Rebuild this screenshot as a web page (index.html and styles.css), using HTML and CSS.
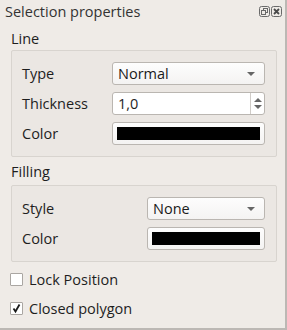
FILE: index.html
```html
<!DOCTYPE html>
<html lang="en">
<head>
    <meta charset="UTF-8">
    <title>Selection properties</title>
    <link rel="stylesheet" href="styles.css">
</head>
<body>
    <div class="panel">
        <div class="titlebar">
            <span class="title">Selection properties</span>
            <div class="title-buttons">
                <svg width="11" height="11" viewBox="0 0 11 11">
                    <rect x="0.5" y="0.5" width="10" height="10" rx="2" fill="none" stroke="#6a6a6a"/>
                    <rect x="4.5" y="2.5" width="4" height="4" fill="none" stroke="#6a6a6a"/>
                    <rect x="2.5" y="4.5" width="4" height="4" fill="#efebe7" stroke="#6a6a6a"/>
                </svg>
                <svg width="11" height="11" viewBox="0 0 11 11">
                    <rect x="0.5" y="0.5" width="10" height="10" rx="2" fill="none" stroke="#6a6a6a"/>
                    <path d="M3 3 L8 8 M8 3 L3 8" stroke="#4a4a4a" stroke-width="1.8"/>
                </svg>
            </div>
        </div>

        <div class="section-title">Line</div>
        <div class="group">
            <div class="row">
                <label>Type</label>
                <div class="combo wide">Normal<span class="arrow"></span></div>
            </div>
            <div class="row">
                <label>Thickness</label>
                <div class="spin wide">
                    <span class="spin-value">1,0</span>
                    <span class="spin-buttons">
                        <span class="up"></span>
                        <span class="down"></span>
                    </span>
                </div>
            </div>
            <div class="row">
                <label>Color</label>
                <div class="color-btn wide"><span class="swatch"></span></div>
            </div>
        </div>

        <div class="section-title filling">Filling</div>
        <div class="group">
            <div class="row">
                <label>Style</label>
                <div class="combo narrow">None<span class="arrow"></span></div>
            </div>
            <div class="row">
                <label>Color</label>
                <div class="color-btn narrow"><span class="swatch"></span></div>
            </div>
        </div>

        <div class="check-row first">
            <span class="checkbox"></span>
            <span>Lock Position</span>
        </div>
        <div class="check-row">
            <span class="checkbox checked">
                <svg width="11" height="11" viewBox="0 0 11 11">
                    <path d="M2.5 5.5 L4.5 8.5 L8.5 1.5" fill="none" stroke="#1a1a1a" stroke-width="1.8"/>
                </svg>
            </span>
            <span>Closed polygon</span>
        </div>
    </div>
</body>
</html>
```

FILE: styles.css
```css
body {
    margin: 0;
    font-family: "Open Sans", "Noto Sans", sans-serif;
    font-size: 14.5px;
    color: #1e1e1e;
}
.panel {
    width: 287px;
    height: 330px;
    box-sizing: border-box;
    background: #efebe7;
    border-right: 2px solid #bcb8b4;
    border-bottom: 2px solid #bcb8b4;
}
.titlebar {
    height: 22px;
    display: flex;
    align-items: center;
    justify-content: space-between;
    padding: 0 3px 0 5px;
}
.title {
    color: #333;
}
.title-buttons {
    display: flex;
    gap: 1px;
}
.section-title {
    padding: 5px 0 0 11px;
    height: 23px;
    line-height: 23px;
    box-sizing: content-box;
}
.section-title.filling {
    padding-top: 2px;
    height: 26px;
    line-height: 26px;
}
.group {
    margin: 0 8px 0 11px;
    border: 1px solid #d8d4cf;
    border-radius: 2px;
    background: #ebe7e3;
    padding: 11px 11px 11px 10px;
    display: flex;
    flex-direction: column;
    gap: 7px;
}
.row {
    display: flex;
    align-items: center;
    justify-content: space-between;
    height: 23px;
}
.wide {
    width: 153px;
}
.narrow {
    width: 118px;
}
.combo, .spin, .color-btn {
    height: 23px;
    box-sizing: border-box;
    border: 1px solid #bab6b1;
    border-radius: 3px;
    background: linear-gradient(#fdfdfd, #f4f3f2);
}
.combo {
    display: flex;
    align-items: center;
    justify-content: space-between;
    padding: 0 9px 0 5px;
    color: #1a1a1a;
}
.arrow {
    width: 0;
    height: 0;
    border-left: 4px solid transparent;
    border-right: 4px solid transparent;
    border-top: 4px solid #666;
}
.spin {
    display: flex;
    background: #fff;
}
.spin-value {
    flex: 1;
    padding-left: 5px;
    line-height: 21px;
}
.spin-buttons {
    width: 13px;
    border-left: 1px solid #d0ccc8;
    display: flex;
    flex-direction: column;
    align-items: center;
    justify-content: center;
    gap: 3px;
}
.up, .down {
    width: 0;
    height: 0;
    border-left: 4px solid transparent;
    border-right: 4px solid transparent;
}
.up {
    border-bottom: 4px solid #666;
}
.down {
    border-top: 4px solid #666;
}
.color-btn {
    padding: 4px;
    display: flex;
}
.swatch {
    flex: 1;
    background: #000;
}
.check-row {
    display: flex;
    align-items: center;
    gap: 6px;
    padding-left: 10px;
    height: 14px;
    margin-top: 15px;
}
.check-row.first {
    margin-top: 10px;
}
.checkbox {
    width: 13px;
    height: 13px;
    box-sizing: border-box;
    border: 1px solid #aaa6a2;
    border-radius: 1px;
    background: #fff;
    display: flex;
    align-items: center;
    justify-content: center;
}
```
